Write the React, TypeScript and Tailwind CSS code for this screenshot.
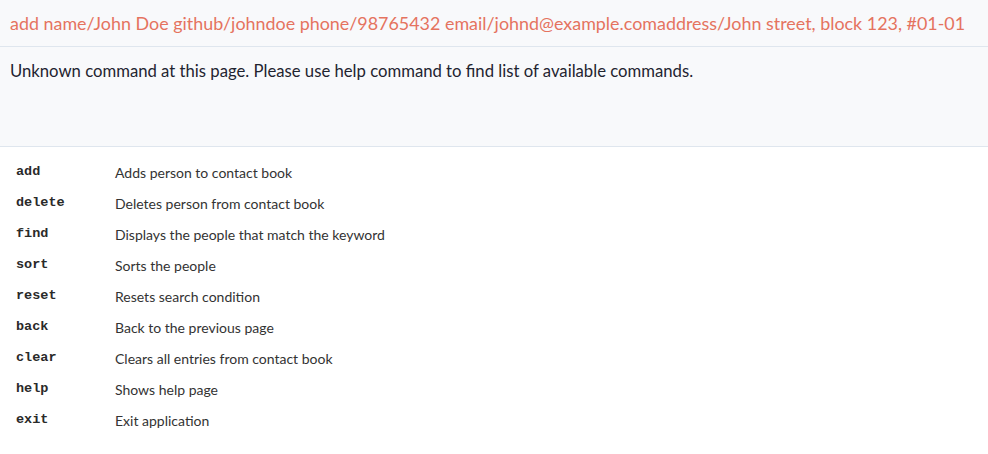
import React from "react";

const cmds: [string, string][] = [
  ["add", "Adds person to contact book"],
  ["delete", "Deletes person from contact book"],
  ["find", "Displays the people that match the keyword"],
  ["sort", "Sorts the people"],
  ["reset", "Resets search condition"],
  ["back", "Back to the previous page"],
  ["clear", "Clears all entries from contact book"],
  ["help", "Shows help page"],
  ["exit", "Exit application"],
];

export default function App() {
  return (
    <div className="w-[988px] h-[454px] bg-white overflow-hidden" style={{ fontFamily: "Lato, 'Open Sans', sans-serif" }}>
      <div className="h-[47px] bg-[#f8f9fb] border-b border-[#dfe6ee] flex items-center px-[10px] text-[17.9px] text-[#e5735f] whitespace-nowrap">
        add name/John Doe github/johndoe phone/98765432 email/johnd@example.comaddress/John street, block 123, #01-01
      </div>
      <div className="h-[100px] bg-[#f8f9fb] border-b border-[#dfe6ee] px-[10px] pt-[12px]">
        <div className="text-[16.7px] text-[#1f2430] whitespace-nowrap">
          Unknown command at this page. Please use help command to find list of available commands.
        </div>
      </div>
      <div className="pt-[10px] pl-[16px]">
        {cmds.map(([c, d]) => (
          <div key={c} className="flex h-[31px] items-center">
            <div className="w-[99px] text-[13.5px] font-bold text-[#2a2a2a]" style={{ fontFamily: "'Liberation Mono', monospace" }}>{c}</div>
            <div className="text-[14px] text-[#333]">{d}</div>
          </div>
        ))}
      </div>
    </div>
  );
}
